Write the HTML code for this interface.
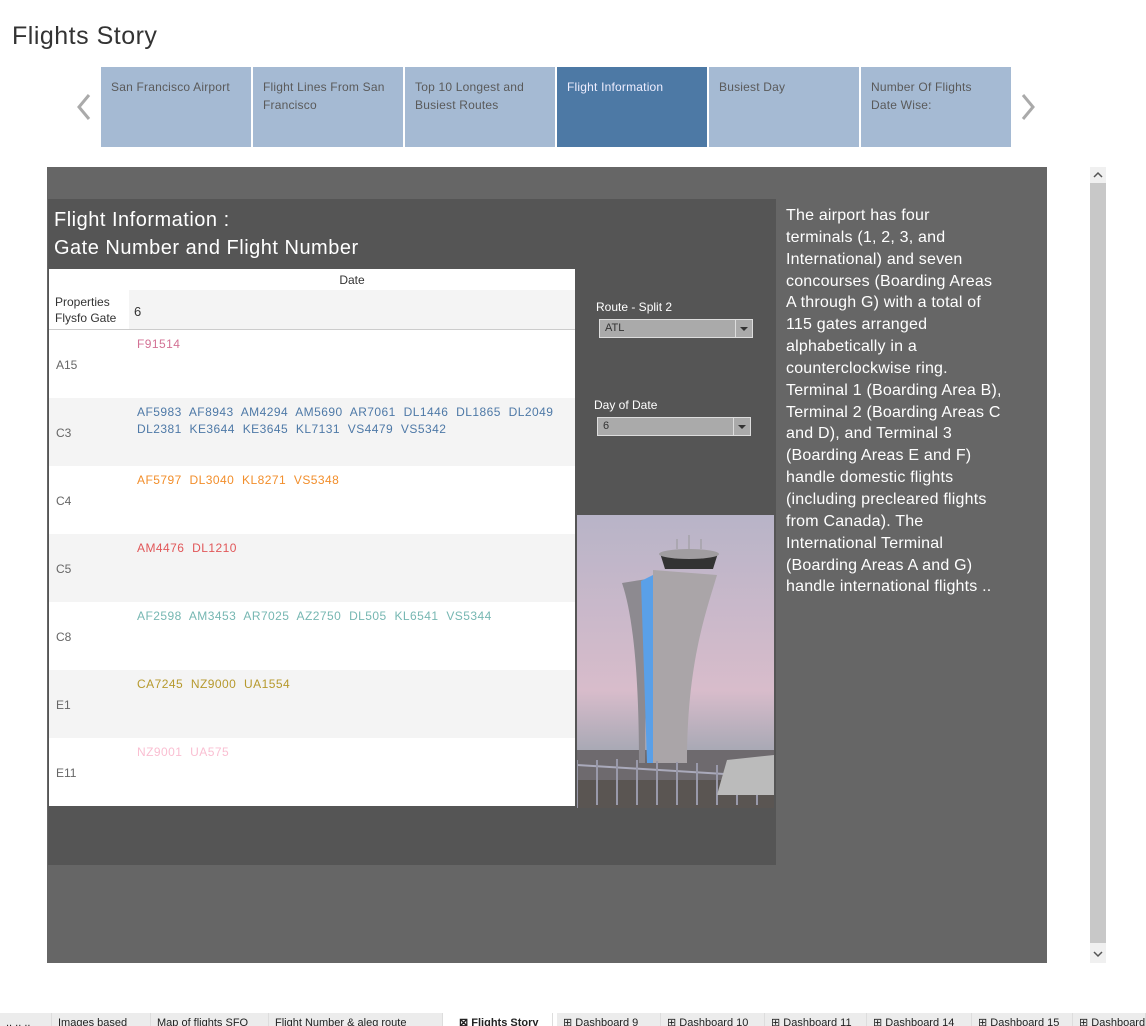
<!DOCTYPE html>
<html><head><meta charset="utf-8"><style>
*{margin:0;padding:0;box-sizing:border-box}
body{width:1146px;height:1026px;background:#fff;font-family:"Liberation Sans",sans-serif;position:relative;overflow:hidden}
.a{position:absolute}
.tab{position:absolute;top:67px;width:150px;height:80px;background:#a5bad3;color:#5a5a5a;font-size:12px;line-height:18px;padding:11px 10px;letter-spacing:.2px}
.tab.on{background:#4d79a5;color:#eef}
.row{position:absolute;left:49px;width:526px;height:68px;font-size:12px}
.row .g{position:absolute;left:7px;top:28px;color:#666}
.row .f{position:absolute;left:88px;top:6px;line-height:17px;width:440px;word-spacing:4px;letter-spacing:.45px}
.sel{position:absolute;height:19px;background:#aaa;border:1px solid #ddd;font-size:11px;color:#333;padding:2px 0 0 5px}
.sel i{position:absolute;right:0;top:0;width:17px;height:17px;border-left:1px solid #ddd}
.sel i:after{content:"";position:absolute;left:4px;top:7px;border:4px solid transparent;border-top:4px solid #333}
.bt{position:absolute;top:1013px;height:13px;background:#ececec;border-right:1px solid #ddd;font-size:11px;color:#222;padding-left:6px;overflow:hidden;white-space:nowrap;line-height:20px}
</style></head><body>
<div class="a" style="left:12px;top:22px;font-size:25px;letter-spacing:.5px;color:#333">Flights Story</div>
<svg class="a" style="left:74px;top:93px" width="20" height="28"><path d="M15 2 L5 14 L15 26" stroke="#aaa" stroke-width="3" fill="none"/></svg>
<svg class="a" style="left:1018px;top:93px" width="20" height="28"><path d="M5 2 L15 14 L5 26" stroke="#aaa" stroke-width="3" fill="none"/></svg>
<div class="tab" style="left:101px">San Francisco Airport</div>
<div class="tab" style="left:253px">Flight Lines From San<br>Francisco</div>
<div class="tab" style="left:405px">Top 10 Longest and<br>Busiest Routes</div>
<div class="tab on" style="left:557px">Flight Information</div>
<div class="tab" style="left:709px">Busiest Day</div>
<div class="tab" style="left:861px">Number Of Flights<br>Date Wise:</div>

<div class="a" style="left:47px;top:167px;width:1000px;height:796px;background:#666"></div>
<div class="a" style="left:48px;top:199px;width:728px;height:666px;background:#555"></div>
<div class="a" style="left:54px;top:206px;color:#fff;font-size:20px;line-height:28px;letter-spacing:.5px">Flight Information :<br>Gate Number and Flight Number</div>
<div class="a" style="left:49px;top:269px;width:526px;height:537px;background:#fff"></div>
<div class="a" style="left:49px;top:273px;width:606px;text-align:center;font-size:12px;color:#333">Date</div>
<div class="a" style="left:129px;top:290px;width:446px;height:40px;background:#f4f4f4"></div>
<div class="a" style="left:49px;top:329px;width:526px;height:1px;background:#ccc"></div>
<div class="a" style="left:55px;top:294px;font-size:12px;line-height:16px;color:#333">Properties<br>Flysfo Gate</div>
<div class="a" style="left:134px;top:304px;font-size:13px;color:#333">6</div>
<div class="row" style="top:330px;background:#fff"><span class="g">A15</span><span class="f" style="color:#d37295">F91514</span></div>
<div class="row" style="top:398px;background:#f4f4f4"><span class="g">C3</span><span class="f" style="color:#4e79a7">AF5983 AF8943 AM4294 AM5690 AR7061 DL1446 DL1865 DL2049<br>DL2381 KE3644 KE3645 KL7131 VS4479 VS5342</span></div>
<div class="row" style="top:466px;background:#fff"><span class="g">C4</span><span class="f" style="color:#f28e2b">AF5797 DL3040 KL8271 VS5348</span></div>
<div class="row" style="top:534px;background:#f4f4f4"><span class="g">C5</span><span class="f" style="color:#e15759">AM4476 DL1210</span></div>
<div class="row" style="top:602px;background:#fff"><span class="g">C8</span><span class="f" style="color:#76b7b2">AF2598 AM3453 AR7025 AZ2750 DL505 KL6541 VS5344</span></div>
<div class="row" style="top:670px;background:#f4f4f4"><span class="g">E1</span><span class="f" style="color:#b6992d">CA7245 NZ9000 UA1554</span></div>
<div class="row" style="top:738px;background:#fff"><span class="g">E11</span><span class="f" style="color:#fabfd2">NZ9001 UA575</span></div>

<div class="a" style="left:596px;top:300px;color:#fff;font-size:12px">Route - Split 2</div>
<div class="sel" style="left:599px;top:319px;width:154px">ATL<i></i></div>
<div class="a" style="left:594px;top:398px;color:#fff;font-size:12px">Day of Date</div>
<div class="sel" style="left:597px;top:417px;width:154px">6<i></i></div>

<svg class="a" style="left:577px;top:515px" width="197" height="293">
<defs><linearGradient id="sk" x1="0" y1="0" x2="0" y2="1"><stop offset="0" stop-color="#b8b4c8"/><stop offset=".6" stop-color="#d8bccb"/><stop offset=".8" stop-color="#a9a9b5"/></linearGradient></defs>
<rect width="197" height="293" fill="url(#sk)"/>
<rect y="235" width="197" height="58" fill="#6e6a6e"/>
<rect y="265" width="197" height="28" fill="#5a5552"/>
<path d="M45 68 L70 64 L68 248 L62 248 C62 160 56 100 45 68Z" fill="#8d8a90"/>
<path d="M64 66 L76 60 L76 248 L70 248Z" fill="#5aa0e8"/>
<path d="M76 55 L140 60 C128 100 110 150 110 248 L76 248Z" fill="#aaa5a8"/>
<path d="M83 38 L141 38 L136 54 L88 54Z" fill="#333"/>
<ellipse cx="112" cy="39" rx="30" ry="5" fill="#a09da0"/>
<path d="M112 34 V20 M100 34 V24 M124 34 V24" stroke="#999"/>
<path d="M0 250 L197 262" stroke="#aab" stroke-width="2"/>
<path d="M0 245 V293 M20 245 V290 M40 244 V290 M60 245 V290 M80 246 V290 M100 247 V290 M120 248 V290 M140 250 V290 M160 251 V290 M180 252 V290" stroke="#99a" stroke-width="2"/>
<path d="M150 245 L197 240 L197 280 L140 280Z" fill="#bbb"/>
</svg>

<div class="a" style="left:786px;top:205px;width:260px;color:#fff;font-size:16px;line-height:21.85px;letter-spacing:.2px">The airport has four<br>terminals (1, 2, 3, and<br>International) and seven<br>concourses (Boarding Areas<br>A through G) with a total of<br>115 gates arranged<br>alphabetically in a<br>counterclockwise ring.<br>Terminal 1 (Boarding Area B),<br>Terminal 2 (Boarding Areas C<br>and D), and Terminal 3<br>(Boarding Areas E and F)<br>handle domestic flights<br>(including precleared flights<br>from Canada). The<br>International Terminal<br>(Boarding Areas A and G)<br>handle international flights ..</div>

<div class="a" style="left:1090px;top:167px;width:16px;height:796px;background:#f0f0f0"></div>
<div class="a" style="left:1090px;top:183px;width:16px;height:760px;background:#c8c8c8"></div>
<svg class="a" style="left:1092px;top:170px" width="12" height="10"><path d="M2 7 L6 3 L10 7" stroke="#555" stroke-width="1.5" fill="none"/></svg>
<svg class="a" style="left:1092px;top:949px" width="12" height="10"><path d="M2 3 L6 7 L10 3" stroke="#555" stroke-width="1.5" fill="none"/></svg>

<div class="bt" style="left:0;width:52px">.. .. ..</div>
<div class="bt" style="left:52px;width:99px">Images based</div>
<div class="bt" style="left:151px;width:118px">Map of flights SFO</div>
<div class="bt" style="left:269px;width:174px">Flight Number &amp; aleg route</div>
<div class="bt" style="left:453px;width:100px;background:#fff;font-weight:bold">⊠ Flights Story</div>
<div class="bt" style="left:557px;width:104px">⊞ Dashboard 9</div>
<div class="bt" style="left:661px;width:104px">⊞ Dashboard 10</div>
<div class="bt" style="left:765px;width:102px">⊞ Dashboard 11</div>
<div class="bt" style="left:867px;width:105px">⊞ Dashboard 14</div>
<div class="bt" style="left:972px;width:101px">⊞ Dashboard 15</div>
<div class="bt" style="left:1073px;width:73px">⊞ Dashboard</div>
</body></html>
